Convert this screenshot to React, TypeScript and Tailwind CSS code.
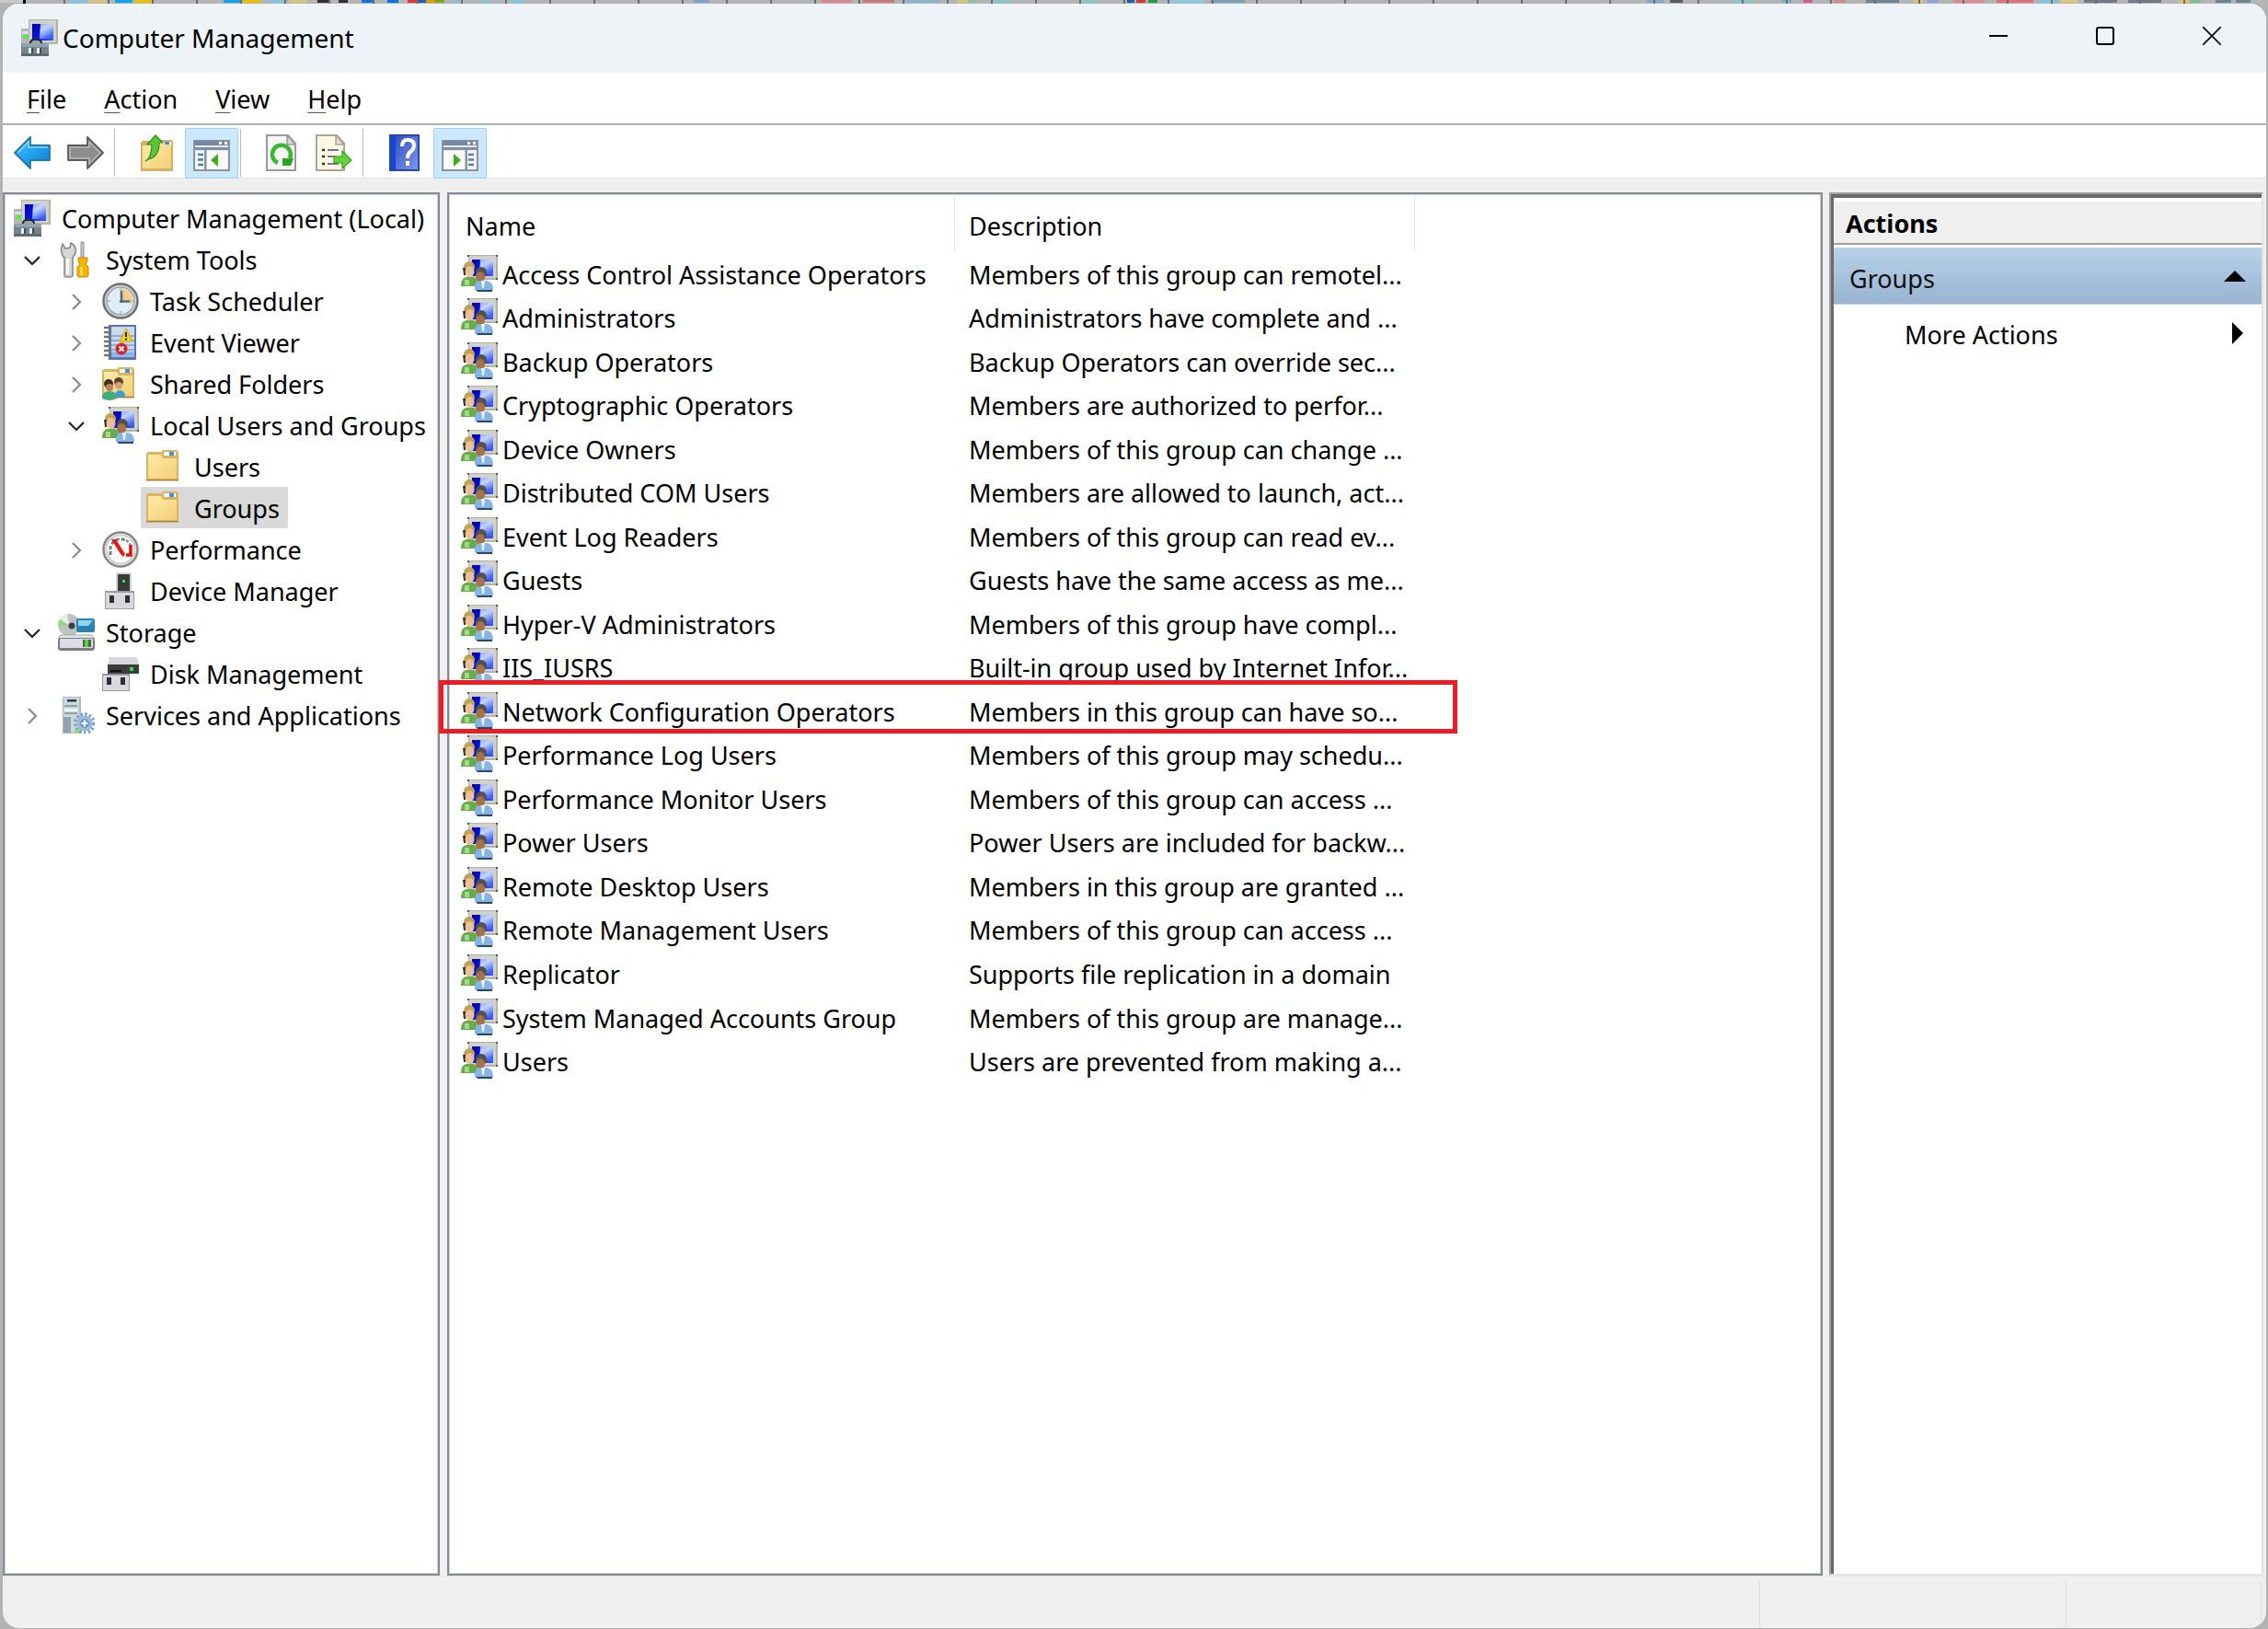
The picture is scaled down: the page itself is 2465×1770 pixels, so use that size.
import type { ReactNode } from "react";
import clsx from "clsx";

/* ---------- icons (40 x 40 grid) ---------- */

function Icon({ children, className }: { children: ReactNode; className?: string }) {
  return (
    <svg viewBox="0 0 40 40" className={clsx("h-10 w-10 shrink-0", className)} aria-hidden="true">
      {children}
    </svg>
  );
}

// gradients shared by the icons
function IconDefs() {
  return (
    <svg className="absolute h-0 w-0" aria-hidden="true">
      <defs>
        <linearGradient id="screen" x1="0" y1="0" x2="1" y2="1">
          <stop offset="0" stopColor="#0203a8" />
          <stop offset="0.5" stopColor="#0a18dc" />
          <stop offset="1" stopColor="#3f5cf4" />
        </linearGradient>
        <linearGradient id="glare" x1="0" y1="0" x2="0.5" y2="1">
          <stop offset="0" stopColor="#8fa6ff" />
          <stop offset="0.4" stopColor="#c4d4ff" />
          <stop offset="1" stopColor="#4262f2" />
        </linearGradient>
        <linearGradient id="folder" x1="0" y1="0" x2="1" y2="1">
          <stop offset="0" stopColor="#ffeaa6" />
          <stop offset="1" stopColor="#f3cf78" />
        </linearGradient>
        <linearGradient id="back" x1="0" y1="0" x2="1" y2="1">
          <stop offset="0" stopColor="#4cc3ff" />
          <stop offset="0.5" stopColor="#1fa2ee" />
          <stop offset="1" stopColor="#1479c8" />
        </linearGradient>
        <linearGradient id="help" x1="0" y1="0" x2="1" y2="1">
          <stop offset="0" stopColor="#3450c4" />
          <stop offset="1" stopColor="#7c98ec" />
        </linearGradient>
      </defs>
    </svg>
  );
}

function Monitor({ x, y, w, h }: { x: number; y: number; w: number; h: number }) {
  return (
    <>
      <rect x={x} y={y} width={w} height={h} fill="#b3b3a9" />
      <rect x={x + 1} y={y + 1} width={w - 3} height={h - 3} fill="#d2d2c8" />
      <rect x={x + 4} y={y + 5} width={w - 9} height={h - 9} fill="url(#screen)" />
      <path d={`M${x + 13} ${y + 5}H${x + w - 5}V${y + h - 6}H${x + 12}z`} fill="url(#glare)" />
    </>
  );
}

function ComputerIcon() {
  return (
    <Icon>
      <rect x="0" y="10" width="10" height="18" fill="#b4b8ba" />
      <rect x="1" y="13" width="8" height="3" fill="#e0e2e2" />
      <rect x="2.5" y="17" width="5" height="4" fill="#58f028" />
      <Monitor x={8} y={0} w={32} h={27} />
      <path d="M10 27v-2q1-3 4-3h4q3 0 4 3v2" fill="#9aa5ab" stroke="#26292c" strokeWidth="2" />
      <path d="M2 26h28v13H0V28z" fill="#74858f" />
      <path d="M2 26h28v4H1z" fill="#93a3ac" />
      <rect x="0" y="37" width="30" height="3" fill="#5a6973" />
      <rect x="8" y="31" width="3" height="6" fill="#e9eef0" />
      <rect x="17" y="31" width="3" height="6" fill="#e9eef0" />
      <rect x="11" y="31" width="2" height="6" fill="#3c4a52" />
      <rect x="20" y="31" width="2" height="6" fill="#3c4a52" />
    </Icon>
  );
}

function ToolsIcon() {
  return (
    <Icon>
      <path d="M5 3l3 5 5-1 1-5c5 2 7 8 4 13l-2 3v19q0 2-3 2h-3q-3 0-3-2V18C3 15 3 7 5 3z" fill="#d6d6d6" stroke="#8a8a8a" strokeWidth="1.6" />
      <path d="M9 19h3v17H9z" fill="#f7f7f7" />
      <path d="M25 1h3v17h-3z" fill="#c9c9c9" stroke="#8d8d8d" />
      <path d="M22 18h10v4l-2 3 3 3v9q0 2-2 2h-8q-2 0-2-2v-9l3-3-2-3z" fill="#f5b400" stroke="#c98500" />
      <path d="M24 28h3v9h-3z" fill="#ffdc55" />
    </Icon>
  );
}

function ClockIcon() {
  return (
    <Icon>
      <circle cx="20" cy="20" r="18.5" fill="#d5d7d8" stroke="#6d6f70" strokeWidth="2.5" />
      <circle cx="20" cy="20" r="15" fill="#e0edf8" stroke="#9ea5aa" strokeWidth="1.5" />
      <path d="M21 20V6a14 14 0 0 1 11 19l-3-5z" fill="#f3cd85" />
      <path d="M21 9v13M19 20.5h11" stroke="#4f6a80" strokeWidth="2.5" fill="none" />
      <path d="M20 6v3M20 31v3M6 20h3M31 20h3" stroke="#9ab2c4" strokeWidth="1.5" />
    </Icon>
  );
}

function EventIcon() {
  return (
    <Icon>
      <rect x="7" y="1" width="30" height="38" fill="#5b73b5" />
      <rect x="10" y="3" width="25" height="33" fill="#c9d9ee" />
      <path d="M10 13h25M10 18h25M10 23h25M10 28h25M10 33h25" stroke="#7f9fd0" strokeWidth="1.5" />
      <path d="M10 30h25v6H10z" fill="#7fb0e6" opacity="0.7" />
      <path d="M3 4h6M3 9h6M3 14h6M3 19h6M3 24h6M3 29h6M3 34h6" stroke="#737373" strokeWidth="2.5" strokeLinecap="round" />
      <path d="M26 5l7 14H19z" fill="#f6d21c" stroke="#c9a200" strokeLinejoin="round" />
      <path d="M26 9v5M26 15.5v2" stroke="#222" strokeWidth="2" />
      <circle cx="21" cy="27" r="6.5" fill="#d9222b" />
      <path d="M18.5 24.5l5 5M23.5 24.5l-5 5" stroke="#fff" strokeWidth="1.8" />
    </Icon>
  );
}

function FolderShape() {
  return (
    <>
      <path d="M0 6l2-2h14l2-2h15l2 2v31H0z" fill="#d9b35e" />
      <path d="M2 7h14l2 4h15v22H2z" fill="url(#folder)" />
      <rect x="19" y="4" width="13" height="4" fill="#fff" />
      <rect x="25" y="4" width="5" height="4" fill="#3d8fe8" />
      <path d="M0 34h35v1.5H0z" fill="#a9853a" />
    </>
  );
}

function FolderIcon() {
  return (
    <Icon>
      <FolderShape />
    </Icon>
  );
}

function SharedFolderIcon() {
  return (
    <Icon>
      <FolderShape />
      <circle cx="7" cy="20" r="5" fill="#3b3026" />
      <circle cx="8" cy="24" r="4" fill="#b98557" />
      <path d="M0 36q0-8 8-8t8 8q-8 4-16 0z" fill="#3fae7c" />
      <circle cx="18" cy="18" r="5" fill="#5d4430" />
      <circle cx="18" cy="22" r="4" fill="#d6a273" />
      <path d="M14 34q0-7 5-7 6 0 6 7z" fill="#3c9fd8" />
    </Icon>
  );
}

function UsersIcon({ className }: { className?: string }) {
  return (
    <Icon className={className}>
      <Monitor x={8} y={0} w={32} h={27} />
      <path d="M7 0h2v2H7zM38 0h2v2h-2zM38 25h2v2h-2z" fill="#55554e" />
      <ellipse cx="9" cy="13" rx="6" ry="6" fill="#c0a354" />
      <path d="M2 14h3v8H3z" fill="#3b3120" />
      <ellipse cx="9.5" cy="18" rx="5" ry="6" fill="#e8c09a" />
      <path d="M0 33q0-8 6-9h7q5 1 5 9v1H0z" fill="#68ab4c" />
      <path d="M4 27h5v6H4z" fill="#a5d98a" />
      <ellipse cx="22" cy="19" rx="6" ry="6" fill="#54504b" />
      <ellipse cx="21" cy="24" rx="5" ry="6" fill="#a5734a" />
      <path d="M15 38q-1-9 6-10h7q7 1 7 10l-3 2H18z" fill="#86b4e4" />
      <path d="M22 28h4l-1 8h-2z" fill="#e6f2ff" />
      <path d="M17 38h17v2H18z" fill="#2a4768" />
    </Icon>
  );
}

function GaugeIcon() {
  return (
    <Icon>
      <circle cx="20" cy="20" r="18.5" fill="#fdfdfb" stroke="#858585" strokeWidth="2.5" />
      <circle cx="20" cy="20" r="15.5" fill="#fff" stroke="#cfcac4" strokeWidth="2" />
      <path d="M9 26v-7a11 11 0 0 1 16-9" fill="none" stroke="#668a78" strokeWidth="3" strokeDasharray="4 2" />
      <path d="M26 10q5 3 5 8" fill="none" stroke="#668a78" strokeWidth="2.5" strokeDasharray="3 2" />
      <path d="M31 15v11h-5" fill="none" stroke="#e01010" strokeWidth="3.5" />
      <path d="M10 9l5 0 10 16-2 3-3-3z" fill="#f01414" />
    </Icon>
  );
}

function DeviceIcon() {
  return (
    <Icon>
      <rect x="15" y="0" width="17" height="21" fill="#d2d5d8" />
      <rect x="17" y="2" width="13" height="18" fill="#383a3c" />
      <rect x="22" y="8" width="3" height="3" fill="#38e038" />
      <rect x="3" y="20" width="32" height="20" fill="#9b9da2" />
      <rect x="4" y="22" width="30" height="17" fill="#d6d8de" />
      <rect x="8" y="25" width="5" height="8" fill="#2f3031" />
      <rect x="25" y="25" width="5" height="8" fill="#2f3031" />
    </Icon>
  );
}

function StorageIcon() {
  return (
    <Icon>
      <circle cx="12" cy="12" r="12" fill="#bfc2c2" />
      <path d="M12 12L1 6a12 12 0 0 1 9-6z" fill="#e8ecea" />
      <path d="M12 12L0 13a12 12 0 0 1 2-7z" fill="#93d984" />
      <circle cx="15" cy="13" r="3.5" fill="#3d4244" />
      <rect x="20" y="5" width="20" height="15" rx="2" fill="#2585b4" />
      <path d="M22 7h16l-5 6H22z" fill="#8ed6f2" />
      <path d="M3 23h34l3 4H0z" fill="#e6e6ea" stroke="#a5a5aa" />
      <rect x="0" y="26" width="40" height="14" rx="3" fill="#7b7b84" />
      <rect x="2" y="27" width="36" height="10" rx="1" fill="#dcdce6" />
      <rect x="27" y="28" width="9" height="8" fill="#55585c" />
      <rect x="29" y="28" width="4" height="8" fill="#48e020" />
    </Icon>
  );
}

function DiskIcon() {
  return (
    <Icon>
      <path d="M8 2h30l2 9H6z" fill="#d5d8dd" />
      <rect x="6" y="10" width="34" height="10" fill="#3a3c3e" />
      <rect x="30" y="13" width="4" height="4" fill="#30e040" />
      <rect x="9" y="16" width="12" height="2" fill="#111" />
      <rect x="0" y="20" width="30" height="19" fill="#96989d" />
      <rect x="1" y="22" width="28" height="16" fill="#d8dae0" />
      <rect x="5" y="24" width="5" height="8" fill="#2f3031" />
      <rect x="20" y="24" width="5" height="8" fill="#2f3031" />
    </Icon>
  );
}

function ServicesIcon() {
  return (
    <Icon>
      <rect x="5" y="0" width="20" height="40" fill="#a9b9c2" />
      <rect x="6" y="1" width="17" height="38" fill="#cbd8de" />
      <rect x="10" y="3" width="10" height="2.5" fill="#2b3a42" />
      <path d="M7 10h14M7 18h14" stroke="#7c8f99" strokeWidth="1.5" />
      <path d="M7 13h14v3H7z" fill="#eef4f6" />
      <rect x="6" y="22" width="8" height="17" fill="#8fa3ad" />
      <circle cx="29" cy="29" r="10" fill="none" stroke="#7fa3c8" strokeWidth="4" strokeDasharray="2.5 2.2" />
      <circle cx="29" cy="29" r="8.5" fill="#9cbbda" />
      <circle cx="29" cy="29" r="5" fill="#6d96c2" />
      <path d="M29 25.5v7M25.5 29h7" stroke="#fff" strokeWidth="2.2" />
      <rect x="18" y="36" width="5" height="3" fill="#8ce860" />
    </Icon>
  );
}

function BackIcon() {
  return (
    <Icon>
      <path d="M1 20L18 3v9h21v16H18v9z" fill="url(#back)" stroke="#2277b0" strokeWidth="1.8" strokeLinejoin="round" />
      <path d="M4 20L16 8v6h21" fill="none" stroke="#8fd8ff" strokeWidth="1.5" />
    </Icon>
  );
}

function ForwardIcon() {
  return (
    <Icon>
      <path d="M39 20L22 3v9H1v16h21v9z" fill="#8c8c8c" stroke="#5a5a5a" strokeWidth="1.8" strokeLinejoin="round" />
      <path d="M3 26V14h21V8l12 12-12 12v-6z" fill="none" stroke="#b9b9b9" strokeWidth="1.5" />
    </Icon>
  );
}

function UpFolderIcon() {
  return (
    <Icon>
      <path d="M1 9l2-2h18l2-1h12l1 2v32H1z" fill="#d6b063" />
      <path d="M3 12h14l3-3h14v28H3z" fill="url(#folder)" />
      <rect x="26" y="8" width="8" height="3" fill="#fff" />
      <rect x="27" y="8" width="5" height="3" fill="#3d8fe8" />
      <path d="M6 29q3-1 5-6 2-5 2-12H8l9-10 8 8h-4q0 15-11 18-3 1-4 2z" fill="#57c93a" stroke="#2f8f22" strokeWidth="1.2" strokeLinejoin="round" />
    </Icon>
  );
}

function PaneIcon({ flip }: { flip?: boolean }) {
  return (
    <Icon>
      <rect x="0" y="6" width="40" height="34" fill="#8e949c" />
      <rect x="2" y="8" width="36" height="30" fill="#e8ecef" />
      <rect x="2" y="7" width="36" height="5" fill="#7687a0" />
      <path d="M28 8h3v3h-3zM34 8h3v3h-3z" fill="#fff" />
      <rect x="2" y="14" width="36" height="3" fill="#7d90ab" />
      <g transform={flip ? "translate(40 0) scale(-1 1)" : undefined}>
        <rect x="12" y="17" width="2.5" height="21" fill="#8e949c" />
        <rect x="3" y="18" width="9" height="20" fill="#fff" />
        <path d="M5 22h6M5 27.5h6M5 33h6" stroke="#3f7fc8" strokeWidth="2.5" />
        <rect x="15" y="18" width="22" height="20" fill="#fafafa" />
        <path d="M27 21v14l-8-7z" fill="#3fae1e" />
      </g>
    </Icon>
  );
}

function RefreshIcon() {
  return (
    <Icon>
      <path d="M5 1h23l8 9v29H5z" fill="#f7f7f7" stroke="#9a9a9a" strokeWidth="2" />
      <path d="M27 1v10h9z" fill="#d8d8d8" stroke="#9a9a9a" strokeWidth="1.5" />
      <path d="M17 31a10 10 0 1 1 13-5" fill="none" stroke="#39b82d" strokeWidth="4.5" />
      <path d="M22 26h12l-3 8h-9z" fill="#2aa51f" />
    </Icon>
  );
}

function ExportIcon() {
  return (
    <Icon>
      <path d="M1 1h22l8 9v29H1z" fill="#fdf8e4" stroke="#a8a49a" strokeWidth="2" />
      <path d="M22 1v10h9z" fill="#e4e0d4" stroke="#a8a49a" strokeWidth="1.5" />
      <path d="M7 17h3M7 24h3M7 32h3" stroke="#333" strokeWidth="2.5" />
      <path d="M13 17h12M13 24h8M13 32h12" stroke="#7a7296" strokeWidth="2" />
      <path d="M20 24h9v-6l10 10-10 9v-6h-9z" fill="#5fd43a" stroke="#35a01f" strokeWidth="1.2" />
    </Icon>
  );
}

function HelpIcon() {
  return (
    <Icon>
      <rect x="1" y="0" width="33" height="40" fill="#2a46a8" />
      <rect x="2" y="1" width="6" height="38" fill="#1747cc" />
      <rect x="8" y="2" width="24" height="36" fill="url(#help)" />
      <path d="M15 13q0-7 6-7 7 0 7 6 0 4-4 7-3 2-3 7" fill="none" stroke="#fff" strokeWidth="4" />
      <rect x="19" y="29" width="4" height="5" fill="#fff" />
    </Icon>
  );
}

/* ---------- data ---------- */

type Node = {
  label: string;
  level: 0 | 1 | 2 | 3;
  icon: ReactNode;
  open?: boolean;
  selected?: boolean;
};

const tree: Node[] = [
  { label: "Computer Management (Local)", level: 0, icon: <ComputerIcon /> },
  { label: "System Tools", level: 1, icon: <ToolsIcon />, open: true },
  { label: "Task Scheduler", level: 2, icon: <ClockIcon />, open: false },
  { label: "Event Viewer", level: 2, icon: <EventIcon />, open: false },
  { label: "Shared Folders", level: 2, icon: <SharedFolderIcon />, open: false },
  { label: "Local Users and Groups", level: 2, icon: <UsersIcon />, open: true },
  { label: "Users", level: 3, icon: <FolderIcon /> },
  { label: "Groups", level: 3, icon: <FolderIcon />, selected: true },
  { label: "Performance", level: 2, icon: <GaugeIcon />, open: false },
  { label: "Device Manager", level: 2, icon: <DeviceIcon /> },
  { label: "Storage", level: 1, icon: <StorageIcon />, open: true },
  { label: "Disk Management", level: 2, icon: <DiskIcon /> },
  { label: "Services and Applications", level: 1, icon: <ServicesIcon />, open: false },
];

const indents = ["pl-[10px]", "pl-[10px]", "pl-[58px]", "pl-[106px]"];

const groups = [
  { name: "Access Control Assistance Operators", description: "Members of this group can remotel..." },
  { name: "Administrators", description: "Administrators have complete and ..." },
  { name: "Backup Operators", description: "Backup Operators can override sec..." },
  { name: "Cryptographic Operators", description: "Members are authorized to perfor..." },
  { name: "Device Owners", description: "Members of this group can change ..." },
  { name: "Distributed COM Users", description: "Members are allowed to launch, act..." },
  { name: "Event Log Readers", description: "Members of this group can read ev..." },
  { name: "Guests", description: "Guests have the same access as me..." },
  { name: "Hyper-V Administrators", description: "Members of this group have compl..." },
  { name: "IIS_IUSRS", description: "Built-in group used by Internet Infor..." },
  { name: "Network Configuration Operators", description: "Members in this group can have so...", marked: true },
  { name: "Performance Log Users", description: "Members of this group may schedu..." },
  { name: "Performance Monitor Users", description: "Members of this group can access ..." },
  { name: "Power Users", description: "Power Users are included for backw..." },
  { name: "Remote Desktop Users", description: "Members in this group are granted ..." },
  { name: "Remote Management Users", description: "Members of this group can access ..." },
  { name: "Replicator", description: "Supports file replication in a domain" },
  { name: "System Managed Accounts Group", description: "Members of this group are manage..." },
  { name: "Users", description: "Users are prevented from making a..." },
];

// slivers of the tab icons of the window behind: x, width, colour
const slivers: [number, number, string][] = [
  [0, 25, "#c9c9c9"],
  [75, 20, "#86c5dc"], [96, 19, "#d8c67c"], [125, 19, "#0aa5ea"], [146, 20, "#f2bd00"],
  [243, 19, "#0aa5ea"], [264, 19, "#f2bd00"], [293, 19, "#86c5dc"], [314, 20, "#d8c67c"],
  [345, 14, "#333333"], [368, 10, "#333333"], [393, 12, "#0f74e0"], [421, 12, "#0f74e0"],
  [443, 10, "#d9363a"], [453, 10, "#1c5fc0"], [463, 10, "#e0a000"], [473, 10, "#7ca81c"],
  [493, 10, "#8fc0cc"], [522, 12, "#8fc0cc"], [554, 16, "#86c5dc"], [754, 16, "#7f9fc4"],
  [892, 34, "#d88a90"], [938, 34, "#c87a78"], [985, 36, "#8fb4cc"], [1040, 14, "#d8c67c"], [1052, 10, "#8fc0a0"],
  [1078, 20, "#8cc4c8"], [1173, 20, "#8cc4c8"], [1225, 8, "#1c5fc0"], [1235, 10, "#d9363a"], [1248, 10, "#2c9a4c"],
  [1268, 40, "#8cc8e0"], [1315, 38, "#7f9fb4"], [1790, 18, "#7fa8cc"], [1815, 14, "#5c5c5c"],
  [1884, 22, "#8cc4c8"], [1937, 10, "#6cb4cc"], [1960, 10, "#d0608c"], [1992, 14, "#d08a90"],
  [2028, 36, "#6c8494"], [2080, 10, "#dcc470"], [2095, 12, "#8ca4dc"], [2123, 34, "#dc8c90"],
  [2170, 40, "#e07078"], [2217, 20, "#7cc4e0"], [2239, 19, "#dcc87c"],
  [2265, 36, "#78748c"], [2313, 36, "#78748c"], [2368, 12, "#dcc470"], [2380, 12, "#84bc94"],
  [2408, 17, "#6c8494"], [2430, 16, "#6c8494"],
];

/* ---------- pieces ---------- */

function BackgroundStrip() {
  const seams = Array.from({ length: 49 }, (_, i) => 69 + i * 48);
  return (
    <svg viewBox="0 0 2465 4" preserveAspectRatio="none" className="block h-1 w-full bg-[#b3b5b5]" aria-hidden="true">
      {slivers.map(([x, w, fill]) => (
        <rect key={x} x={x} y="0" width={w} height="3" fill={fill} />
      ))}
      {seams.map((x) => (
        <rect key={x} x={x} y="0" width="2" height="4" fill="#6e6e6e" />
      ))}
      <rect x="25" y="0" width="3" height="4" fill="#000" />
    </svg>
  );
}

function TitleBar() {
  return (
    <header className="flex h-[75px] shrink-0 items-center bg-[#eef3f8] pb-[2px] pl-5">
      <ComputerIcon />
      <h1 className="ml-[5px] grow text-[28px]">Computer Management</h1>
      <div className="mr-px flex self-stretch pb-[3px]">
        <button aria-label="Minimize" className="flex w-[116px] items-center justify-center">
          <svg viewBox="0 0 20 20" className="h-5 w-5"><path d="M0 10h20" stroke="#000" strokeWidth="2" /></svg>
        </button>
        <button aria-label="Maximize" className="flex w-[116px] items-center justify-center">
          <svg viewBox="0 0 20 20" className="h-5 w-5"><rect x="1" y="1" width="18" height="18" rx="2" fill="none" stroke="#000" strokeWidth="2" /></svg>
        </button>
        <button aria-label="Close" className="flex w-[116px] items-center justify-center">
          <svg viewBox="0 0 20 20" className="h-5 w-5"><path d="M0 0l20 20M20 0L0 20" stroke="#111" strokeWidth="1.8" /></svg>
        </button>
      </div>
    </header>
  );
}

function MenuBar() {
  return (
    <nav className="flex h-[55px] shrink-0 items-center gap-[39px] bg-white pl-[25px] pt-[2px] text-[27px]">
      {["File", "Action", "View", "Help"].map((item) => (
        <button key={item} className="px-px">
          <span className="underline decoration-[#555] decoration-1 underline-offset-4">{item[0]}</span>
          {item.slice(1)}
        </button>
      ))}
    </nav>
  );
}

function ToolButton({ label, active, children }: { label: string; active?: boolean; children: ReactNode }) {
  return (
    <button
      aria-label={label}
      aria-pressed={active}
      className={clsx(
        "flex h-[55px] w-[58px] items-center justify-center border",
        active ? "rounded-xs border-[#99d1ff] bg-[#cce8ff]" : "border-transparent",
      )}
    >
      {children}
    </button>
  );
}

function Separator() {
  return <div className="h-[52px] w-px bg-[#b8b8b8]" />;
}

function Toolbar() {
  return (
    <div className="flex h-[60px] shrink-0 items-center border-b border-t-2 border-b-[#e3e3e3] border-t-[#b0b0b0] bg-white pl-[3px] pt-[3px]">
      <ToolButton label="Back"><BackIcon /></ToolButton>
      <ToolButton label="Forward"><ForwardIcon /></ToolButton>
      <div className="ml-[2px] mr-[18px]"><Separator /></div>
      <ToolButton label="Up one level"><UpFolderIcon /></ToolButton>
      <ToolButton label="Show or hide console tree" active><PaneIcon /></ToolButton>
      <div className="ml-[2px] mr-[14px]"><Separator /></div>
      <ToolButton label="Refresh"><RefreshIcon /></ToolButton>
      <ToolButton label="Export list"><ExportIcon /></ToolButton>
      <div className="ml-[2px] mr-[18px]"><Separator /></div>
      <ToolButton label="Help"><HelpIcon /></ToolButton>
      <ToolButton label="Show or hide action pane" active><PaneIcon flip /></ToolButton>
    </div>
  );
}

function Chevron({ open }: { open: boolean }) {
  return (
    <button aria-label={open ? "Collapse" : "Expand"} className="flex w-10 justify-center pt-[3px]">
      <svg viewBox="0 0 20 20" className="h-5 w-5" fill="none" strokeWidth="2.2">
        {open ? <path d="M2 6l8 8 8-8" stroke="#222" /> : <path d="M6 2l8 8-8 8" stroke="#8a8a8a" />}
      </svg>
    </button>
  );
}

function TreePane() {
  return (
    <aside className="w-[475px] shrink-0 overflow-hidden border-2 border-[#868b96] bg-white pt-[3px] shadow-[inset_0_0_0_1px_#cdd0d6]">
      <ul>
        {tree.map((node) => (
          <li key={node.label} className={clsx("flex h-[45px] items-center", indents[node.level])}>
            {node.level > 0 && (
              <div className="mr-2 w-10">{node.open !== undefined && <Chevron open={node.open} />}</div>
            )}
            <button
              className={clsx(
                "-ml-[6px] flex h-full items-center gap-3 whitespace-nowrap pl-[6px] pr-[9px]",
                node.selected && "rounded-xs bg-[#d9d9d9]",
              )}
            >
              {node.icon}
              <span className="pt-[3px]">{node.label}</span>
            </button>
          </li>
        ))}
      </ul>
    </aside>
  );
}

function GroupList() {
  return (
    <main className="ml-2 min-w-0 grow border-2 border-[#868b96] bg-white shadow-[inset_0_0_0_1px_#cdd0d6]">
      <table className="w-[1050px] table-fixed border-collapse whitespace-nowrap text-left">
        <thead>
          <tr className="h-[64px]">
            <th className="w-[550px] p-0 font-normal">
              <div className="flex h-[60px] items-center border-r border-[#e5e5e5] pl-[18px] pt-[6px]">Name</div>
            </th>
            <th className="p-0 font-normal">
              <div className="flex h-[60px] items-center border-r border-[#e5e5e5] pl-[15px] pt-[6px]">Description</div>
            </th>
          </tr>
        </thead>
      </table>
      <table className="h-[903px] w-[1050px] table-fixed border-collapse whitespace-nowrap text-left" aria-label="Groups">
        <tbody>
          {groups.map((group) => (
            <tr key={group.name} className="relative">
              <td className="w-[550px] p-0 pl-[13px]">
                <div className="flex items-center gap-[5px]">
                  <UsersIcon className="mb-1" />
                  {group.name}
                </div>
                {group.marked && (
                  <div className="pointer-events-none absolute -left-[11px] -top-[11px] h-[58px] w-[1107px] border-[5px] border-[#ed1c24]" />
                )}
              </td>
              <td className="p-0 pl-[15px]">{group.description}</td>
            </tr>
          ))}
        </tbody>
      </table>
    </main>
  );
}

function ActionsPane() {
  return (
    <aside className="ml-[7px] mr-[3px] flex w-[472px] shrink-0 flex-col border-2 border-b-[#e3e3e3] border-l-[#a0a0a0] border-r-[#e3e3e3] border-t-[#a0a0a0]">
      <div className="grow border-l-[3px] border-t-[4px] border-[#696969] bg-white pt-1">
        <h2 className="flex h-[45px] items-center bg-[#efefef] pl-[13px] pt-[3px] font-bold">Actions</h2>
        <div className="h-[2px] bg-[#a0a0a0]" />
        <button className="mt-[3px] flex h-[62px] w-full items-center justify-between border-b border-[#c5d5e8] bg-linear-to-b from-[#b9d1ea] to-[#99b4d1] pl-[17px] pr-[17px] text-[#111]">
          <span className="pt-[7px]">Groups</span>
          <svg viewBox="0 0 24 24" className="h-6 w-6"><path d="M12 6l12 12H0z" /></svg>
        </button>
        <button className="flex h-[62px] w-full items-center justify-between pl-[77px] pr-[17px]">
          <span className="pt-[3px]">More Actions</span>
          <svg viewBox="0 0 24 24" className="h-6 w-6"><path d="M9 0l12 12L9 24z" /></svg>
        </button>
      </div>
    </aside>
  );
}

function StatusBar() {
  return (
    <footer className="flex h-[57px] shrink-0 justify-end border-t border-[#e6e6e6] pr-[5px] pt-1">
      <div className="w-[333px] border-l border-[#dedede]" />
      <div className="w-[213px] border-x border-[#dedede]" />
    </footer>
  );
}

export default function App() {
  return (
    <div className="flex h-screen flex-col overflow-hidden bg-[#b3b3b3] font-['Noto_Sans',sans-serif] text-[27px] leading-9 text-black">
      <IconDefs />
      <BackgroundStrip />
      <div className="mb-px ml-[3px] mr-[2px] flex min-h-0 grow flex-col overflow-hidden rounded-[18px] bg-[#efefef]">
        <TitleBar />
        <MenuBar />
        <Toolbar />
        <div className="flex min-h-0 grow pt-[15px]">
          <TreePane />
          <GroupList />
          <ActionsPane />
        </div>
        <StatusBar />
      </div>
    </div>
  );
}
